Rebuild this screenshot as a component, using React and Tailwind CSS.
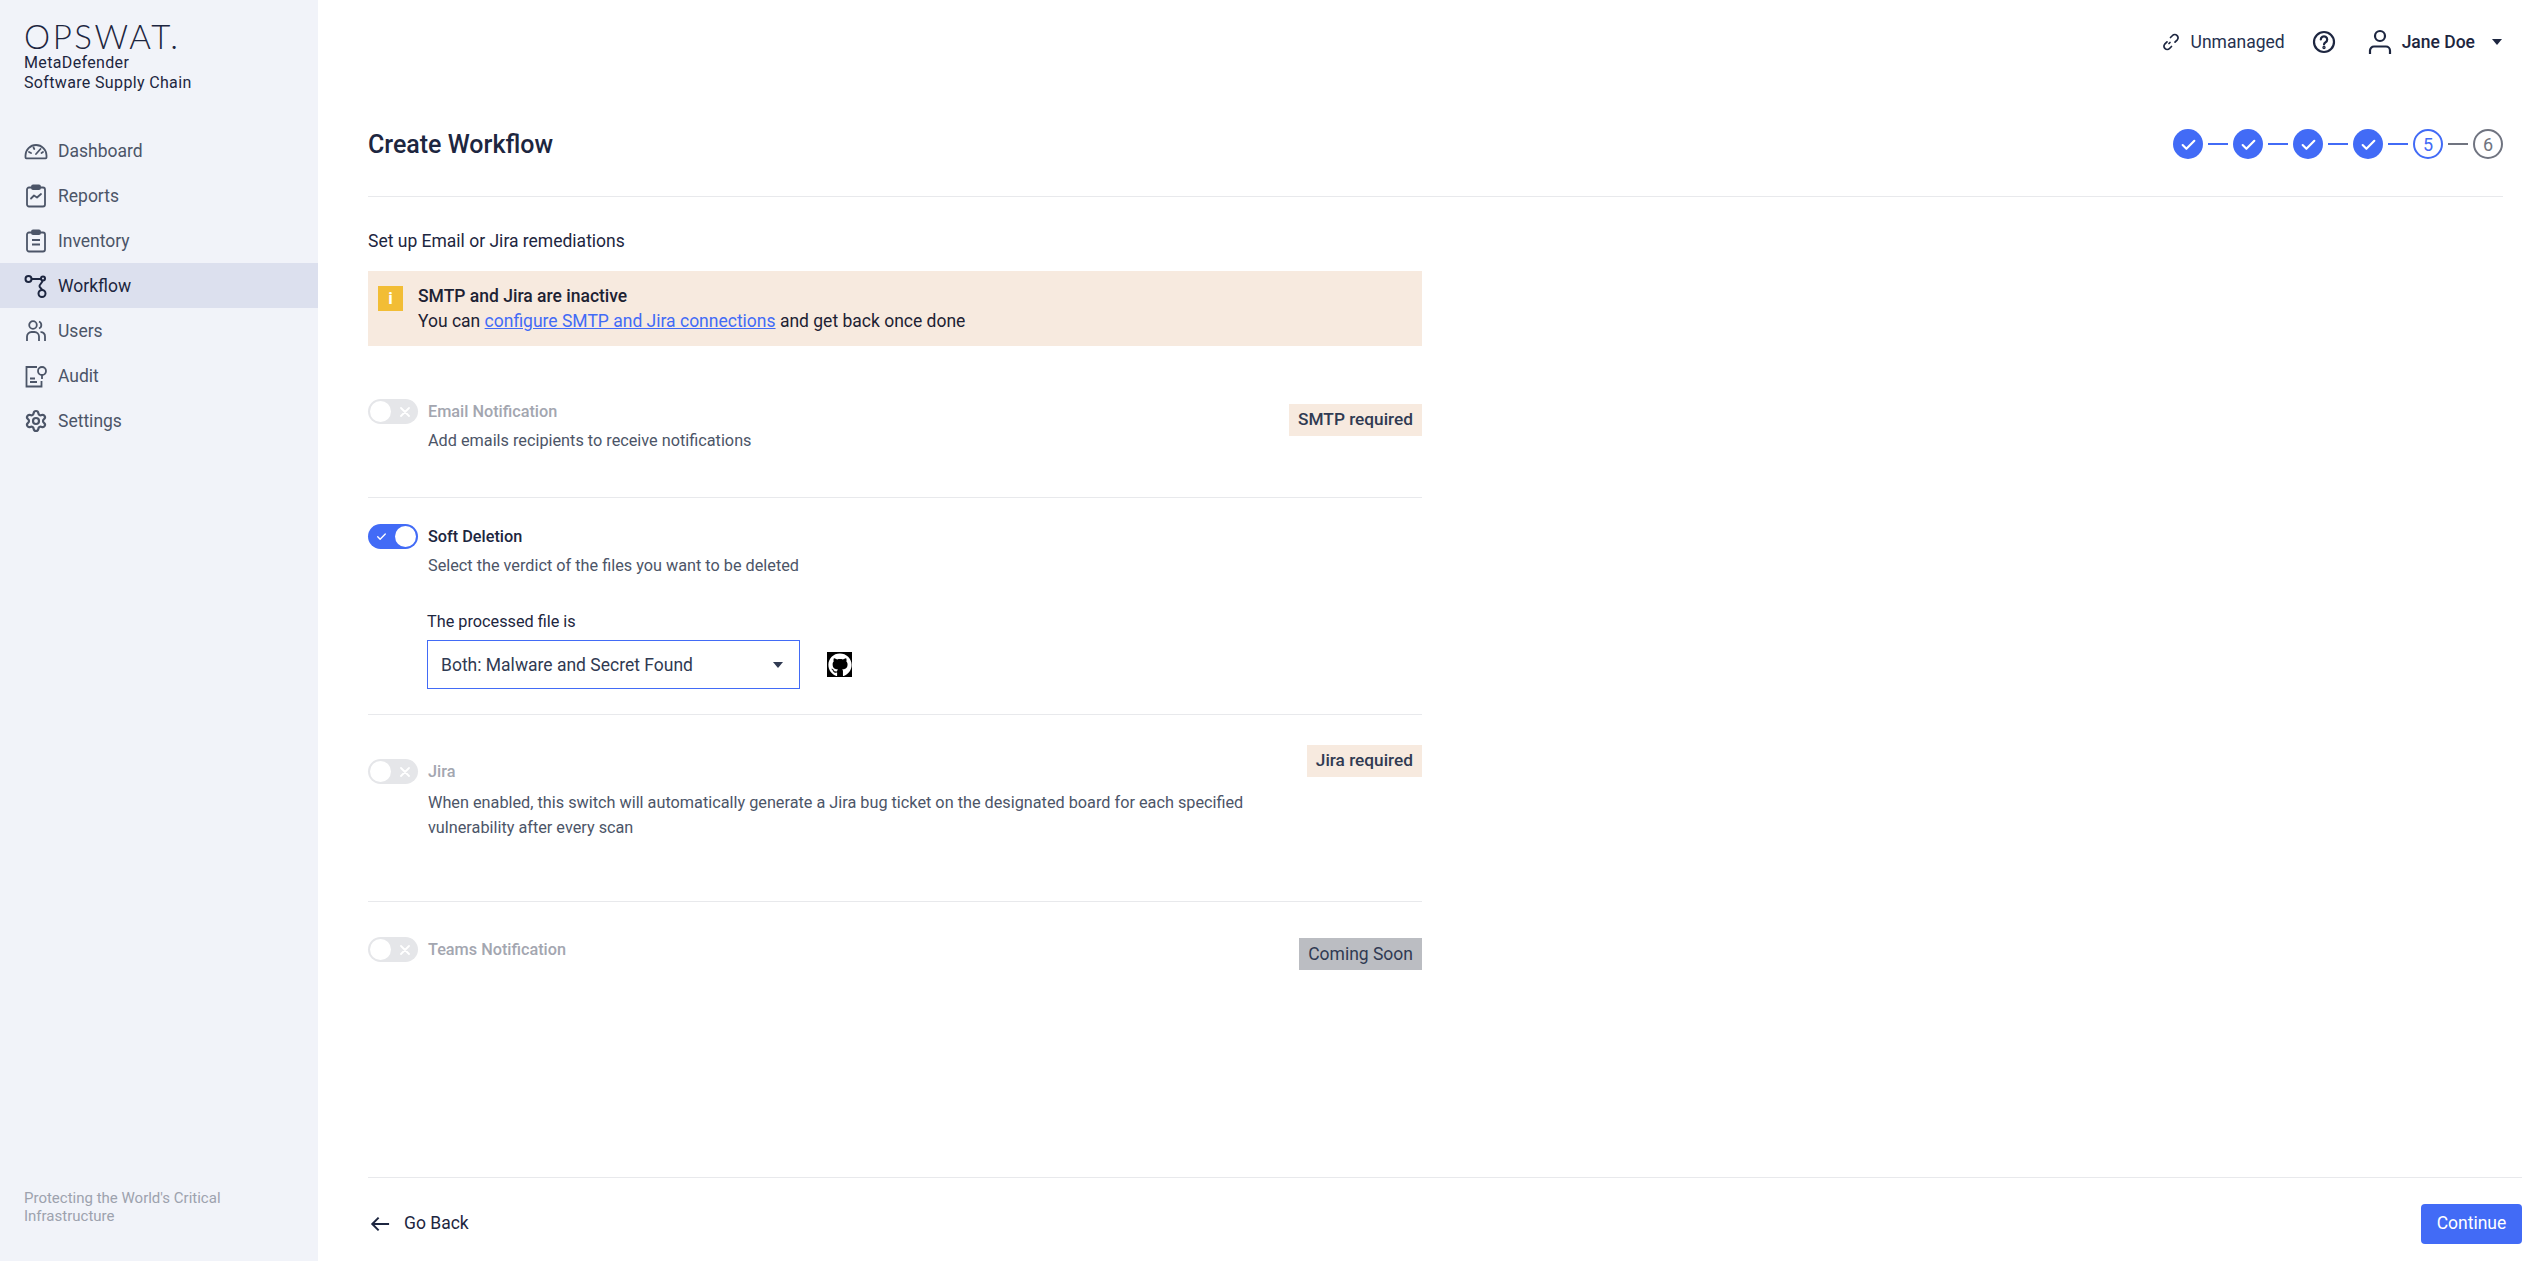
import React from 'react';
import { FaGithub } from 'react-icons/fa';
import { Settings } from 'lucide-react';

const GaugeIcon = () => (
  <svg width="24" height="24" viewBox="0 0 24 24" fill="none" stroke="currentColor" strokeWidth="1.8">
    <path d="M1.500 18.500v-2a10.500 10.500 0 0 1 21 0v2q0 .8-.8.8H2.300q-.8 0-.8-.8z" />
    <path d="M12 15l4.500-5M5 13l2 1M19 13l-1.500 1M9.500 8.500l.8 1.500" strokeLinecap="round" />
  </svg>
);

const ReportsIcon = () => (
  <svg width="24" height="24" viewBox="0 0 24 24" fill="none" stroke="currentColor" strokeWidth="1.8">
    <rect x="3" y="3.500" width="18" height="19" rx="2" />
    <rect x="8" y="1.500" width="8" height="3.500" rx="1" fill="currentColor" />
    <path d="M7 14.500l3-3 3 2 4-3.500" strokeLinecap="round" strokeLinejoin="round" />
  </svg>
);

const InventoryIcon = () => (
  <svg width="24" height="24" viewBox="0 0 24 24" fill="none" stroke="currentColor" strokeWidth="1.8">
    <rect x="3" y="3.500" width="18" height="19" rx="2" />
    <rect x="8" y="1.500" width="8" height="3.500" rx="1" fill="currentColor" />
    <path d="M8 11h8M8 15.500h8" />
  </svg>
);

const WorkflowIcon = () => (
  <svg width="24" height="24" viewBox="0 0 24 24" fill="none" stroke="currentColor" strokeWidth="2">
    <circle cx="4.500" cy="5" r="3" />
    <circle cx="19" cy="4.500" r="2" />
    <circle cx="18" cy="19.500" r="3.500" />
    <path d="M7.500 5H17M18.500 6.500c0 2.500-3 3.500-3 5.500s2.500 2.500 2.500 4" />
  </svg>
);

const UsersIcon = () => (
  <svg width="24" height="24" viewBox="0 0 24 24" fill="none" stroke="currentColor" strokeWidth="1.8">
    <circle cx="9" cy="6" r="3.800" />
    <path d="M15 2.500a3.800 3.800 0 0 1 0 7M3 22v-4.500a4.500 4.500 0 0 1 4.500-4.500h3a4.500 4.500 0 0 1 4.500 4.500V22M16.500 13.200a4 4 0 0 1 4.500 4.300V22" />
  </svg>
);

const AuditIcon = () => (
  <svg width="24" height="24" viewBox="0 0 24 24" fill="none" stroke="currentColor" strokeWidth="1.8">
    <path d="M13 3H2.500v19.500h15V17" />
    <circle cx="18" cy="7" r="4" />
    <path d="M18 11v4M6 14.500h5M6 18h7" />
  </svg>
);

const SettingsIcon = () => <Settings size={24} strokeWidth={2.2} />;

const UnlinkIcon = () => (
  <svg width="18" height="18" viewBox="0 0 18 18" fill="none" stroke="currentColor" strokeWidth="1.700" strokeLinecap="round">
    <path d="M8.500 4.500l2-2a3 3 0 0 1 4.500 0 3 3 0 0 1 .3 4.300l-2.300 2.400" />
    <path d="M9.500 13.500l-2 2a3 3 0 0 1-4.500 0 3 3 0 0 1-.3-4.300L5 8.800" />
    <path d="M7 10.500l1-1" />
  </svg>
);

const HelpIcon = () => (
  <svg width="24" height="24" viewBox="0 0 24 24" fill="none" stroke="currentColor" strokeWidth="2.200" strokeLinecap="round">
    <circle cx="12" cy="12" r="10" />
    <path d="M8.800 9.500a3.200 3.200 0 1 1 4.800 2.800c-1 .6-1.600 1-1.600 2.200" />
    <circle cx="12" cy="17.500" r=".6" fill="currentColor" />
  </svg>
);

const PersonIcon = () => (
  <svg width="24" height="26" viewBox="0 0 24 26" fill="none" stroke="currentColor" strokeWidth="2.200">
    <circle cx="12" cy="7" r="5" />
    <path d="M2 25v-3.500a4 4 0 0 1 4-4h12a4 4 0 0 1 4 4V25" />
  </svg>
);

const Caret = ({ className }) => (
  <svg width="10" height="6" viewBox="0 0 10 6" className={className}>
    <path d="M0 0h10L5 6z" fill="currentColor" />
  </svg>
);

const Check = ({ size = 17 }) => (
  <svg width={size} height={size} viewBox="0 0 16 16" fill="none" stroke="white" strokeWidth="2" strokeLinecap="round" strokeLinejoin="round">
    <path d="M2.500 8.500l3.500 3.500 7.500-7.500" />
  </svg>
);

const navItems = [
  { label: 'Dashboard', Icon: GaugeIcon },
  { label: 'Reports', Icon: ReportsIcon },
  { label: 'Inventory', Icon: InventoryIcon },
  { label: 'Workflow', Icon: WorkflowIcon, active: true },
  { label: 'Users', Icon: UsersIcon },
  { label: 'Audit', Icon: AuditIcon },
  { label: 'Settings', Icon: SettingsIcon },
];

const Sidebar = () => (
  <aside className="w-[318px] shrink-0 bg-[#f1f3f9] flex flex-col">
    <div className="pl-6 pt-[19px] h-[128px]">
      <div className="font-['Lato'] font-light text-[33px] leading-[34px] tracking-[2.550px] text-[#1d2640]">OPSWAT.</div>
      <div className="text-[16px] leading-5 tracking-[0.35px] text-[#1d2640]">MetaDefender</div>
      <div className="text-[16px] leading-5 tracking-[0.35px] text-[#1d2640]">Software Supply Chain</div>
    </div>
    <nav className="flex flex-col">
      {navItems.map(({ label, Icon, active }) => (
        <div
          key={label}
          className={`h-[45px] pl-6 flex items-center gap-[10px] text-[17.500px] ${
            active ? 'bg-[#dce0ee] text-[#1d2640]' : 'text-[#4c5568]'
          }`}
        >
          <Icon />
          <span className="pt-[1px]">{label}</span>
        </div>
      ))}
    </nav>
    <div className="mt-auto pl-6 pb-[36px] pr-10 text-[15px] leading-[18px] text-[#9da2ae]">
      Protecting the World's Critical Infrastructure
    </div>
  </aside>
);

const Stepper = () => (
  <div className="flex items-center gap-[5px]">
    {[1, 2, 3, 4].map((n) => (
      <React.Fragment key={n}>
        <div className="w-[30px] h-[30px] rounded-full bg-[#426bf6] flex items-center justify-center">
          <Check />
        </div>
        <div className="w-5 h-[2px] bg-[#426bf6]" />
      </React.Fragment>
    ))}
    <div className="w-[30px] h-[30px] rounded-full border-2 border-[#426bf6] text-[#426bf6] text-[18px] flex items-center justify-center">5</div>
    <div className="w-5 h-[2px] bg-[#707480]" />
    <div className="w-[30px] h-[30px] rounded-full border-2 border-[#707480] text-[#707480] text-[18px] flex items-center justify-center">6</div>
  </div>
);

const Toggle = ({ on }) =>
  on ? (
    <div className="w-[50px] h-[25px] shrink-0 rounded-full bg-[#426bf6] flex items-center justify-between pl-2 pr-[2px]">
      <Check size={11} />
      <div className="w-[21px] h-[21px] rounded-full bg-white" />
    </div>
  ) : (
    <div className="w-[50px] h-[25px] shrink-0 rounded-full bg-[#e5e6e9] flex items-center justify-between pl-[2px] pr-[8px]">
      <div className="w-[21px] h-[21px] rounded-full bg-white" />
      <svg width="10" height="10" viewBox="0 0 10 10" stroke="white" strokeWidth="1.800" strokeLinecap="round">
        <path d="M1 1l8 8M9 1l-8 8" />
      </svg>
    </div>
  );

const Badge = ({ children, grey, className }) => (
  <div className={`h-8 px-[9px] flex items-center text-[#303a52] ${grey ? 'bg-[#bbbdc2] text-[17.500px]' : 'bg-[#f7eadf] text-[17.250px] font-medium'} ${className}`}>
    {children}
  </div>
);

const SectionHead = ({ on, label }) => (
  <div className="flex items-center gap-[10px]">
    <Toggle on={on} />
    <span className={`pt-[1px] text-[16.250px] font-medium ${on ? 'text-[#1d2640]' : 'text-[#a3a6b0]'}`}>{label}</span>
  </div>
);

const App = () => (
  <div className="h-screen flex bg-white font-['Roboto',sans-serif] overflow-hidden">
    <Sidebar />
    <main className="flex-1 flex flex-col pl-[50px] pr-[10px] min-w-0">
      <div className="h-[84px] shrink-0 pr-[19px] flex items-center justify-end text-[#1d2640]">
        <div className="mr-[11px] text-[#1d2640]"><UnlinkIcon /></div>
        <span className="pt-[1px] text-[17.500px] mr-[27px] text-[#26314f]">Unmanaged</span>
        <div className="mr-[32px]"><HelpIcon /></div>
        <div className="mr-[10px]"><PersonIcon /></div>
        <span className="pt-[1px] text-[17.500px] font-medium mr-[17px]">Jane Doe</span>
        <Caret className="mr-[1px]" />
      </div>

      <div className="mr-[19px] h-[113px] shrink-0 border-b border-[#e8e9ec] flex items-start justify-between pt-[45px]">
        <h1 className="text-[25px] leading-7 font-medium text-[#1d2640] pt-[2px]">Create Workflow</h1>
        <Stepper />
      </div>

      <div className="w-[1054px] flex-1">
        <p className="mt-[33px] text-[17.500px] leading-[22px] text-[#1d2640]">Set up Email or Jira remediations</p>

        <div className="mt-[19px] h-[75px] bg-[#f7eadf] flex pl-[10px] pt-[15px]">
          <div className="w-[25px] h-[25px] bg-[#f2bd35] text-white text-[17px] font-bold flex items-center justify-center">i</div>
          <div className="ml-[15px] text-[17.500px] leading-[25px] -mt-[2px] text-[#1d2233]">
            <div className="font-medium">SMTP and Jira are inactive</div>
            <div>
              You can <span className="text-[#426bf6] underline">configure SMTP and Jira connections</span> and get back once done
            </div>
          </div>
        </div>

        <section className="relative pt-[53px] h-[152px] border-b border-[#e8e9ec]">
          <SectionHead label="Email Notification" />
          <p className="pl-[60px] mt-[7px] text-[16.250px] leading-5 text-[#4c5568]">Add emails recipients to receive notifications</p>
          <Badge className="absolute right-0 top-[58px]">SMTP required</Badge>
        </section>

        <section className="pt-[26px] h-[217px] border-b border-[#e8e9ec]">
          <SectionHead on label="Soft Deletion" />
          <p className="pl-[60px] mt-[7px] text-[16.250px] leading-5 text-[#4c5568]">Select the verdict of the files you want to be deleted</p>
          <div className="pl-[59px] mt-[36px] text-[16.250px] leading-5 text-[#1d2640]">The processed file is</div>
          <div className="ml-[59px] mt-[8px] flex items-center">
            <div className="w-[373px] h-[49px] border border-[#426bf6] pl-[13px] pr-4 flex items-center justify-between text-[17.500px] text-[#303a52]">
              <span>Both: Malware and Secret Found</span>
              <Caret className="text-[#303a52]" />
            </div>
            <div className="ml-[27px] w-[25px] h-[25px] bg-black text-white flex items-center justify-center">
              <FaGithub size={24} />
            </div>
          </div>
        </section>

        <section className="relative pt-[44px] h-[187px] border-b border-[#e8e9ec]">
          <SectionHead label="Jira" />
          <p className="pl-[60px] pr-[160px] mt-[6px] text-[16.250px] leading-[25px] text-[#4c5568]">
            When enabled, this switch will automatically generate a Jira bug ticket on the designated board for each specified vulnerability after every scan
          </p>
          <Badge className="absolute right-0 top-[30px]">Jira required</Badge>
        </section>

        <section className="relative pt-[35px]">
          <SectionHead label="Teams Notification" />
          <Badge grey className="absolute right-0 top-[36px]">Coming Soon</Badge>
        </section>
      </div>

      <div className="h-[84px] shrink-0 border-t border-[#e8e9ec] flex items-center justify-between">
        <div className="flex items-center gap-[14px] pl-[2px] text-[17.500px] text-[#1d2640] mt-[8px]">
          <svg width="20" height="18" viewBox="0 0 22 18" fill="none" stroke="currentColor" strokeWidth="2.200">
            <path d="M21 9H3M9.500 2L2.500 9l7 7" />
          </svg>
          Go Back
        </div>
        <button className="w-[101px] h-10 rounded bg-[#426bf6] text-white text-[17.500px] mt-[8px]">Continue</button>
      </div>
    </main>
  </div>
);

export default App;
